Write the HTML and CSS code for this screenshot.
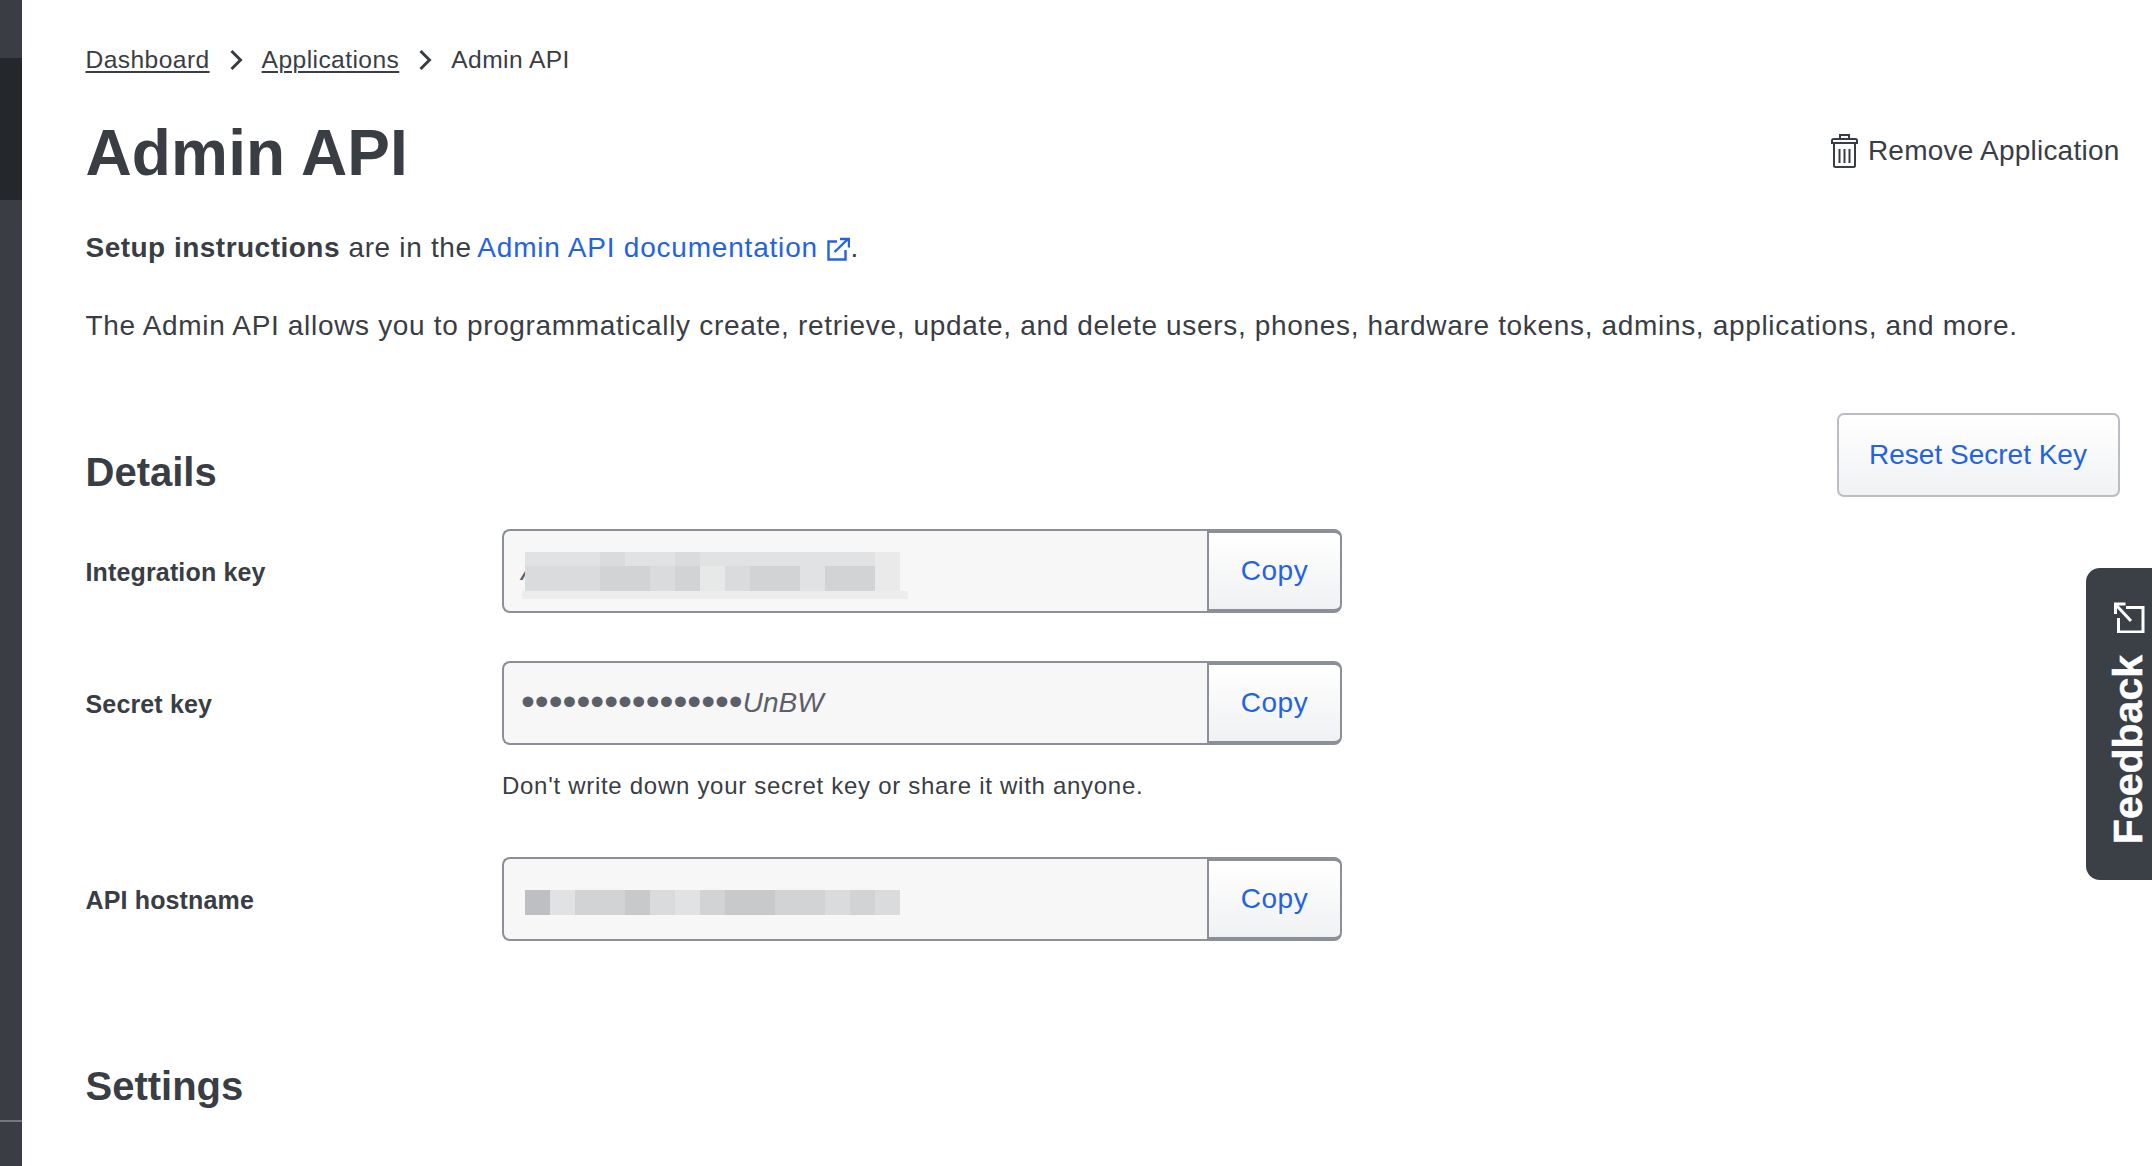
FILE: index.html
```html
<!DOCTYPE html>
<html lang="en">
<head>
<meta charset="utf-8">
<title>Admin API</title>
<link rel="stylesheet" href="styles.css">
</head>
<body>
<div class="page">
  <aside class="rail">
    <div class="rail-top"></div>
    <div class="rail-active"></div>
    <div class="rail-mid"></div>
    <div class="rail-line"></div>
    <div class="rail-end"></div>
  </aside>
  <main class="main">
    <nav class="crumbs">
      <a href="#">Dashboard</a>
      <svg class="chev" viewBox="0 0 14 22"><path d="M2.5 2l9 9-9 9"/></svg>
      <a href="#">Applications</a>
      <svg class="chev" viewBox="0 0 14 22"><path d="M2.5 2l9 9-9 9"/></svg>
      <span>Admin API</span>
    </nav>
    <header class="title-row">
      <h1>Admin API</h1>
      <a class="remove" href="#">
        <svg class="trash" viewBox="0 0 27 34"><path d="M9 5V1h9v4M1 9V6.500A1.500 1.500 0 0 1 2.500 5h22A1.500 1.500 0 0 1 26 6.500V9zM3 9v22.500A1.500 1.500 0 0 0 4.500 33h18a1.500 1.500 0 0 0 1.500-1.500V9M8.500 15v14M13.500 15v14M18.500 15v14"/></svg>
        <span>Remove Application</span>
      </a>
    </header>
    <p class="setup"><strong>Setup instructions</strong> are in the <a href="#">Admin API documentation <svg class="ext" viewBox="0 0 24 24"><path d="M11 4.500H2.500v18h17V13M8.500 15L21.500 2.500M14 2h9v8.500"/></svg></a>.</p>
    <p class="intro">The Admin API allows you to programmatically create, retrieve, update, and delete users, phones, hardware tokens, admins, applications, and more.</p>
    <div class="section-head">
      <h2>Details</h2>
      <button class="reset">Reset Secret Key</button>
    </div>
    <div class="row first">
      <label>Integration key</label>
      <div class="field">
        <div class="value">
          <em>A</em>
          <div class="blur blur-key">
            <div class="cells top"><i class="a"></i><i class="a"></i><i class="a"></i><i class="b"></i><i class="a"></i><i class="a"></i><i class="b"></i><i class="a"></i><i class="a"></i><i class="a"></i><i class="a"></i><i class="a"></i><i class="a"></i><i class="a"></i><i class="d"></i></div>
            <div class="cells bottom"><i class="b"></i><i class="b"></i><i class="b"></i><i class="c"></i><i class="c"></i><i class="b"></i><i class="c"></i><i class="e"></i><i class="b"></i><i class="c"></i><i class="c"></i><i class="a"></i><i class="c"></i><i class="c"></i><i class="d"></i></div>
            <div class="strip"></div>
          </div>
        </div>
        <button class="copy">Copy</button>
      </div>
    </div>
    <div class="row">
      <label>Secret key</label>
      <div class="field">
        <div class="value secret"><span class="dots">••••••••••••••••</span><em>UnBW</em></div>
        <button class="copy">Copy</button>
      </div>
    </div>
    <p class="hint">Don't write down your secret key or share it with anyone.</p>
    <div class="row host">
      <label>API hostname</label>
      <div class="field">
        <div class="value">
          <div class="blur blur-host">
            <div class="cells main-cells"><i class="g"></i><i class="a"></i><i class="c"></i><i class="c"></i><i class="f"></i><i class="b"></i><i class="a"></i><i class="c"></i><i class="f"></i><i class="f"></i><i class="c"></i><i class="c"></i><i class="b"></i><i class="c"></i><i class="b"></i></div>
          </div>
        </div>
        <button class="copy">Copy</button>
      </div>
    </div>
    <h2 class="settings">Settings</h2>
  </main>
  <a class="feedback" href="#">
    <svg viewBox="0 0 32 32"><path d="M13 6.500h17V31H5.500V17M18 20L4 5M2.500 13V3h10"/></svg>
    <span>Feedback</span>
  </a>
</div>
</body>
</html>
```
FILE: styles.css
```css
* { box-sizing: border-box; }
html, body { margin: 0; padding: 0; height: 100%; background: #fff; }
body { font-family: "Liberation Sans", Arial, sans-serif; color: #393d44; overflow: hidden; }
.page { display: flex; height: 1166px; position: relative; overflow: hidden; }

.rail { width: 22px; flex: none; display: flex; flex-direction: column; }
.rail-top { height: 58px; background: #3a3e44; }
.rail-active { height: 142px; background: #24272b; }
.rail-mid { flex: 1; background: #3a3e44; }
.rail-line { height: 2px; background: #74777d; }
.rail-end { height: 44px; background: #3a3e44; }

.main { flex: 1; min-width: 0; padding: 42px 32.500px 0 63.500px; }

.crumbs { display: flex; align-items: center; height: 36px; font-size: 24.600px; letter-spacing: 0.420px; color: #393d44; }
.crumbs a { color: #393d44; text-decoration: underline; text-underline-offset: 3px; text-decoration-thickness: 1.500px; }
.chev { width: 14px; height: 22px; margin: 0 19px 0 19px; fill: none; stroke: #393d44; stroke-width: 3; }

.title-row { display: flex; justify-content: space-between; align-items: center; height: 72px; margin-top: 38px; }
h1 { margin: 2px 0 0; font-size: 64px; line-height: 72px; font-weight: 700; letter-spacing: 0.150px; }
.remove { display: flex; align-items: center; gap: 10px; margin-bottom: 3px; font-size: 28px; letter-spacing: 0.230px; color: #393d44; text-decoration: none; }
.trash { width: 27px; height: 34px; fill: none; stroke: #393d44; stroke-width: 2; }

.setup, .intro { margin: 0; font-size: 28px; line-height: 40px; letter-spacing: 0.670px; }
.setup { margin-top: 40px; }
.setup strong { letter-spacing: 0.480px; }
.setup a { margin-left: -3px; color: #2463e0; text-decoration: none; letter-spacing: 0.800px; }
.ext { width: 24px; height: 24px; vertical-align: -4px; fill: none; stroke: #2463e0; stroke-width: 2.400; }
.intro { margin-top: 38px; }

.section-head { display: flex; justify-content: space-between; height: 84px; margin-top: 67px; }
h2 { margin: 0; font-size: 40px; line-height: 48px; font-weight: 700; }
.section-head h2 { align-self: flex-end; margin-bottom: 1px; }
.reset { width: 283px; height: 84px; border: 2px solid #babdc4; border-radius: 7px; background: linear-gradient(#fff, #f1f2f4); color: #2463e0; font: 28px "Liberation Sans", Arial, sans-serif; padding: 0; }

.row { display: flex; align-items: center; height: 84px; margin-top: 48px; }
.row.first { margin-top: 32px; }
.row label { width: 416.500px; flex: none; padding-top: 2px; font-size: 25px; font-weight: 700; letter-spacing: 0.150px; }
.field { display: flex; width: 840px; height: 84px; }
.value { position: relative; flex: 1; display: flex; align-items: center; padding-left: 17px; background: #f7f7f7; border: 2px solid #8b8f97; border-right: 0; border-radius: 8px 0 0 8px; font-size: 28px; line-height: 1; color: #5b6068; overflow: hidden; }
.value em { font-style: italic; }
.dots { font-size: 39.600px; position: relative; top: -1px; }
.copy { width: 135px; flex: none; padding: 0; border: solid #8b8f97; border-width: 4px 2px 4px 2px; border-radius: 0 8px 8px 0; background: linear-gradient(#fff, #f0f1f3); color: #2463e0; font: 28px "Liberation Sans", Arial, sans-serif; letter-spacing: 0.500px; }

.blur { position: absolute; display: flex; flex-direction: column; left: 18px; width: 386px; }
.blur-key { top: 21px; }
.blur-host { top: 31px; }
.cells { display: flex; margin-left: 3px; }
.cells i { width: 25px; display: block; }
.cells.top { height: 14px; }
.cells.bottom, .cells.main-cells { height: 25px; }
.strip { height: 8px; background: #ededee; }
.cells .a { background: #e1e2e4; }
.cells .b { background: #dadbdd; }
.cells .c { background: #d2d3d5; }
.cells .d { background: #eaeaeb; }
.cells .e { background: #e7e9e8; }
.cells .f { background: #c8c9cb; }
.cells .g { background: #bebfc2; }

.hint { margin: 23px 0 0 416.500px; font-size: 24px; line-height: 36px; letter-spacing: 0.710px; }
.row.host { margin-top: 53px; }
.settings { margin-top: 121px; }

.feedback { position: absolute; top: 568px; right: 0; width: 66px; height: 312px; display: flex; flex-direction: column; align-items: center; padding: 33px 0 0 19px; gap: 22px; background: #3a4045; border-radius: 14px 0 0 14px; color: #fff; text-decoration: none; }
.feedback svg { width: 32px; height: 32px; fill: none; stroke: #fff; stroke-width: 3; flex: none; }
.feedback span { writing-mode: vertical-rl; transform: rotate(180deg); font-size: 41px; line-height: 41px; font-weight: 700; -webkit-text-stroke: 0.500px #fff; }
```
